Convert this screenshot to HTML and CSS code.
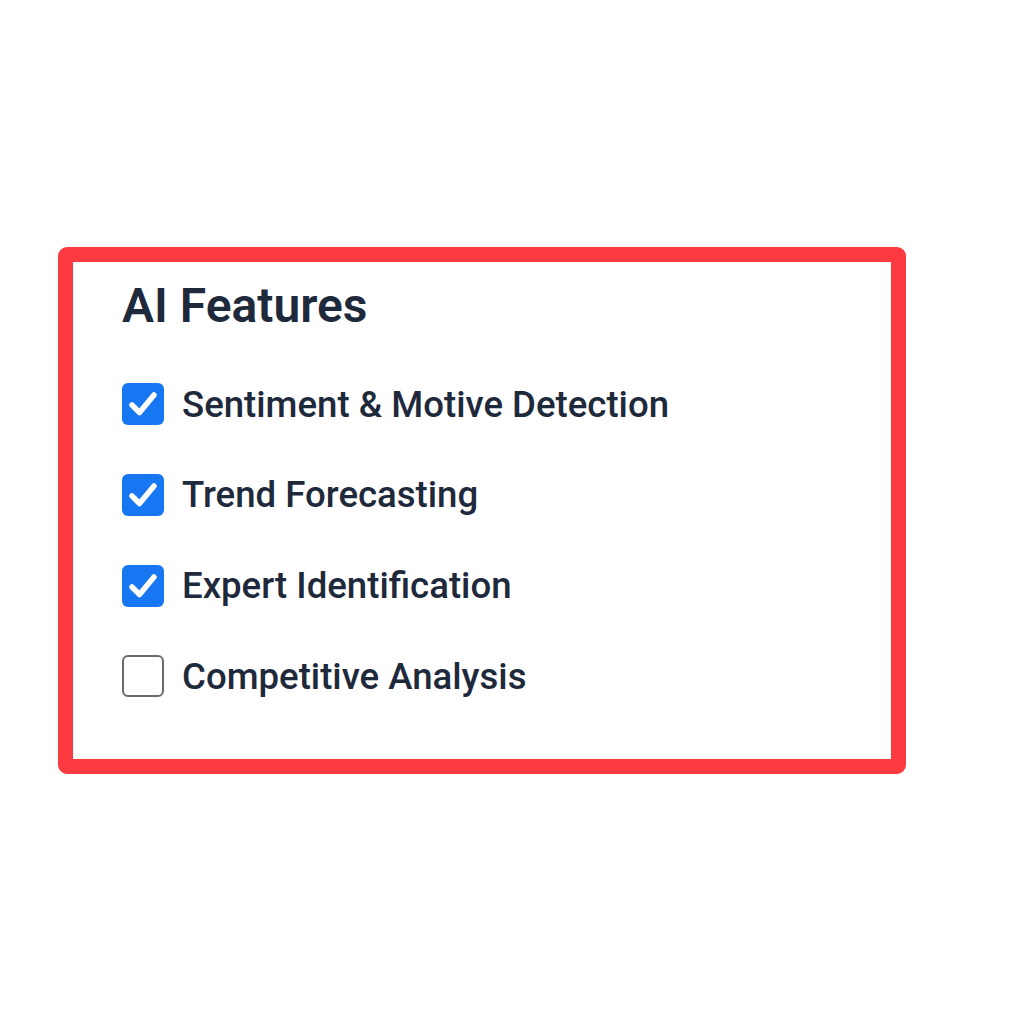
FILE: index.html
```html
<!DOCTYPE html>
<html>
<head>
<meta charset="utf-8">
<link rel="stylesheet" href="styles.css">
</head>
<body>
<section class="panel">
  <h2 class="title">AI Features</h2>
  <ul class="list">
    <li class="row">
      <span class="box checked"><svg viewBox="0 0 42 42" width="42" height="42"><path d="M10 22 L17.5 29.5 L32 12" fill="none" stroke="#fff" stroke-width="5.5" stroke-linecap="round" stroke-linejoin="round"/></svg></span>
      <span class="label">Sentiment &amp; Motive Detection</span>
    </li>
    <li class="row">
      <span class="box checked"><svg viewBox="0 0 42 42" width="42" height="42"><path d="M10 22 L17.5 29.5 L32 12" fill="none" stroke="#fff" stroke-width="5.5" stroke-linecap="round" stroke-linejoin="round"/></svg></span>
      <span class="label">Trend Forecasting</span>
    </li>
    <li class="row">
      <span class="box checked"><svg viewBox="0 0 42 42" width="42" height="42"><path d="M10 22 L17.5 29.5 L32 12" fill="none" stroke="#fff" stroke-width="5.5" stroke-linecap="round" stroke-linejoin="round"/></svg></span>
      <span class="label">Expert Identification</span>
    </li>
    <li class="row">
      <span class="box"></span>
      <span class="label">Competitive Analysis</span>
    </li>
  </ul>
</section>
</body>
</html>
```
FILE: styles.css
```css
html, body {
  margin: 0;
  padding: 0;
  background: #ffffff;
}
body {
  font-family: Roboto, "Liberation Sans", sans-serif;
  color: #1e293b;
  padding-top: 247px;
  padding-left: 58px;
}
.panel {
  box-sizing: border-box;
  width: 848px;
  height: 527px;
  border: 15px solid #fd3a3f;
  border-radius: 9px;
  padding: 16px 0 0 49px;
}
.title {
  margin: 0;
  font-size: 48px;
  line-height: 56px;
  font-weight: 600;
  color: #1e293b;
}
.list {
  list-style: none;
  margin: 49px 0 0 0;
  padding: 0;
  display: flex;
  flex-direction: column;
  gap: 48.8px;
}
.row {
  display: flex;
  align-items: center;
  gap: 18px;
  height: 42px;
}
.box {
  box-sizing: border-box;
  width: 42px;
  height: 42px;
  border-radius: 6px;
  border: 2px solid #6b6b6b;
  flex: none;
  display: block;
}
.box.checked {
  background: #1777f2;
  border: none;
}
.box svg {
  display: block;
}
.label {
  font-size: 36.6px;
  font-weight: 500;
  color: #1e293b;
}
```
